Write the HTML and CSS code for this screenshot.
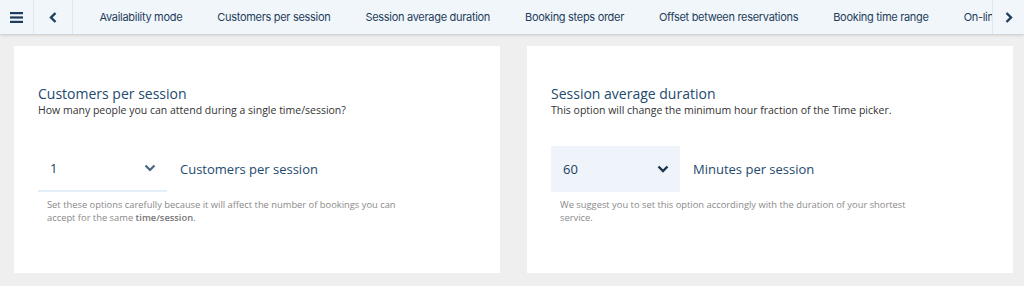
FILE: index.html
```html
<!DOCTYPE html>
<html lang="en">

<head>
    <meta charset="UTF-8">
    <meta name="viewport" content="width=device-width, initial-scale=1.0">
    <title>Booking settings</title>
    <link rel="stylesheet" href="styles.css">
</head>

<body>
    <div class="barra">
        <div class="boton-barra">
            <svg width="13" height="11" viewBox="0 0 13 11">
                <rect x="0" y="0" width="13" height="2.2" fill="#1d3d5c"/>
                <rect x="0" y="4.4" width="13" height="2.2" fill="#1d3d5c"/>
                <rect x="0" y="8.8" width="13" height="2.2" fill="#1d3d5c"/>
            </svg>
        </div>
        <div class="boton-barra">
            <svg width="8" height="11" viewBox="0 0 8 11">
                <path d="M6.5 1 L2 5.5 L6.5 10" fill="none" stroke="#1d3d5c" stroke-width="2.4"/>
            </svg>
        </div>
        <div class="pestanas">
            <div class="pestana">Availability mode</div>
            <div class="pestana">Customers per session</div>
            <div class="pestana">Session average duration</div>
            <div class="pestana">Booking steps order</div>
            <div class="pestana">Offset between reservations</div>
            <div class="pestana">Booking time range</div>
            <div class="pestana">On-line payment</div>
        </div>
        <div class="boton-barra derecha">
            <svg width="8" height="11" viewBox="0 0 8 11">
                <path d="M1.5 1 L6 5.5 L1.5 10" fill="none" stroke="#1d3d5c" stroke-width="2.4"/>
            </svg>
        </div>
    </div>

    <div class="contenido">
        <div class="tarjeta">
            <h2 class="titulo">Customers per session</h2>
            <p class="subtitulo">How many people you can attend during a single time/session?</p>
            <div class="fila">
                <div class="selector linea">
                    <span>1</span>
                    <svg width="12" height="8" viewBox="0 0 12 8">
                        <path d="M1.5 1.5 L6 6 L10.5 1.5" fill="none" stroke="#4b6580" stroke-width="2.2"/>
                    </svg>
                </div>
                <div class="etiqueta">Customers per session</div>
            </div>
            <p class="ayuda">Set these options carefully because it will affect the number of bookings you can accept for the same <b>time/session</b>.</p>
        </div>

        <div class="tarjeta">
            <h2 class="titulo">Session average duration</h2>
            <p class="subtitulo">This option will change the minimum hour fraction of the Time picker.</p>
            <div class="fila">
                <div class="selector relleno">
                    <span>60</span>
                    <svg width="12" height="8" viewBox="0 0 12 8">
                        <path d="M1.5 1.5 L6 6 L10.5 1.5" fill="none" stroke="#1b3550" stroke-width="2.4"/>
                    </svg>
                </div>
                <div class="etiqueta">Minutes per session</div>
            </div>
            <p class="ayuda">We suggest you to set this option accordingly with the duration of your shortest service.</p>
        </div>
    </div>
</body>

</html>
```

FILE: styles.css
```css
body {
    margin: 0;
    background-color: #efefef;
    font-family: "Open Sans", sans-serif;
}

/* barra superior */
.barra {
    display: flex;
    height: 34px;
    background-color: #f1f6fb;
    box-shadow: 0 1px 3px rgba(0, 0, 0, 0.18);
    overflow: hidden;
}

.boton-barra {
    flex: none;
    width: 33px;
    display: flex;
    justify-content: center;
    align-items: center;
    border-right: 1px solid #dde7f1;
}

.boton-barra + .boton-barra {
    width: 38px;
}

.boton-barra.derecha {
    width: 31px;
    border-right: none;
    border-left: 1px solid #dde7f1;
}

.pestanas {
    flex: 1;
    display: flex;
    align-items: center;
    overflow: hidden;
    padding-left: 9px;
}

.pestana {
    flex: none;
    padding: 0 17.5px;
    font-family: Inter, sans-serif;
    font-size: 11px;
    letter-spacing: -0.3px;
    color: #1f3d5a;
    white-space: nowrap;
}

/* tarjetas */
.contenido {
    display: grid;
    grid-template-columns: 486px 486px;
    column-gap: 27px;
    padding: 12px 11px 0 14px;
}

.tarjeta {
    background-color: white;
    height: 227px;
    box-sizing: border-box;
    padding: 38px 24px 0 24px;
}

.titulo {
    margin: 0;
    font-size: 14px;
    font-weight: normal;
    line-height: 19px;
    color: #1d4a6e;
}

.subtitulo {
    margin: 0;
    font-size: 10.5px;
    line-height: 15px;
    color: #333;
}

.fila {
    display: flex;
    align-items: center;
    margin-top: 28px;
}

.selector {
    width: 129px;
    height: 46px;
    box-sizing: border-box;
    display: flex;
    justify-content: space-between;
    align-items: center;
    padding: 0 11px 0 12px;
    font-size: 13px;
    color: #1d3d5c;
}

.selector.linea {
    border-bottom: 2px solid #e3eef9;
}

.selector.relleno {
    background-color: #eef4fa;
}

.etiqueta {
    margin-left: 13px;
    font-size: 13px;
    color: #1d4a6e;
}

.ayuda {
    margin: 6px 0 0 9px;
    max-width: 370px;
    font-size: 9.35px;
    line-height: 13px;
    color: #8a8a8a;
}

.ayuda b {
    font-weight: 600;
    color: #777;
}
```
